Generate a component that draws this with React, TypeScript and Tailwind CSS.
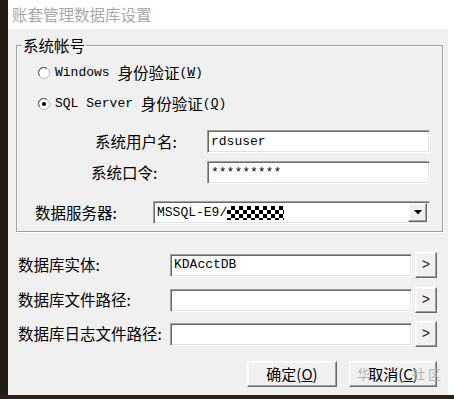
import React from "react";

const cjk = { fontFamily: '"Noto Sans CJK SC", "Noto Sans", sans-serif' };
const mono = { fontFamily: '"Liberation Mono", "DejaVu Sans Mono", monospace' };

const Radio: React.FC<{ checked?: boolean }> = ({ checked }) => (
  <svg width="12" height="12" viewBox="0 0 12 12" className="shrink-0 w-[12px] h-[12px]">
    <circle cx="6" cy="6" r="5.5" fill="#ffffff" stroke="#b8b8b8" strokeWidth="1" />
    <path d="M1.6 8.6 A5 5 0 0 1 8.6 1.6" stroke="#6a6a6a" strokeWidth="1.2" fill="none" />
    {checked && <circle cx="6" cy="6" r="2" fill="#000000" />}
  </svg>
);

const sunken =
  "bg-white border border-t-[#a0a0a0] border-l-[#a0a0a0] border-b-white border-r-white shadow-[inset_1px_1px_0_#696969,inset_-1px_-1px_0_#e3e3e3]";
const raised =
  "bg-[#f0f0f0] border border-t-white border-l-white border-b-[#696969] border-r-[#696969] shadow-[inset_-1px_-1px_0_#a0a0a0,inset_1px_1px_0_#f8f8f8]";

const TextBox: React.FC<{ className: string; value?: string }> = ({ className, value }) => (
  <div className={`${sunken} ${className} flex items-center pl-[3px] text-[13px] text-black`} style={mono}>
    {value}
  </div>
);

const BrowseButton = () => (
  <div className={`${raised} w-[22px] h-[26px] flex items-center justify-center text-[14px] text-[#222]`} style={mono}>
    &gt;
  </div>
);

export default function App() {
  return (
    <div className="w-[454px] h-[399px] flex flex-col bg-[#2a2119] overflow-hidden">
      <div className="flex flex-1">
        <div className="w-[8px] bg-[#231c16]" />
        <div className="flex-1 flex flex-col bg-white">
          <div className="h-[29px] flex items-center pl-[4px] text-[15.5px] text-[#a8a8a8]" style={cjk}>
            账套管理数据库设置
          </div>
          <div className="relative flex-1 mr-[6px] bg-[#f0f0f0] flex flex-col text-black" style={cjk}>
            {/* group box */}
            <div className="relative mt-[16px] ml-[8px] w-[427px] h-[187px] border border-[#a0a0a0] shadow-[inset_1px_1px_0_#fff,1px_1px_0_#fff] flex flex-col">
              <span className="absolute left-[5px] top-[-12px] px-[1px] bg-[#f0f0f0] text-[15.5px] leading-[22px]">
                系统帐号
              </span>
              <div className="mt-[19px] ml-[21px] h-[16px] flex items-center gap-[5px]">
                <Radio />
                <span className="flex items-center">
                  <span className="text-[13px]" style={mono}>Windows&nbsp;</span>
                  <span className="text-[15.5px]">身份验证</span>
                  <span className="text-[13px]" style={mono}>
                    (<u>W</u>)
                  </span>
                </span>
              </div>
              <div className="mt-[15px] ml-[21px] h-[16px] flex items-center gap-[5px]">
                <Radio checked />
                <span className="flex items-center">
                  <span className="text-[13px]" style={mono}>SQL Server&nbsp;</span>
                  <span className="text-[15.5px]">身份验证</span>
                  <span className="text-[13px]" style={mono}>
                    (<u>Q</u>)
                  </span>
                </span>
              </div>
              <div className="mt-[18px] h-[23px] flex items-center">
                <span className="ml-[78px] text-[15.5px]">系统用户名:</span>
                <TextBox className="ml-auto mr-[12px] w-[223px] h-[23px]" value="rdsuser" />
              </div>
              <div className="mt-[8px] h-[23px] flex items-center">
                <span className="ml-[74px] text-[15.5px]">系统口令:</span>
                <TextBox className="ml-auto mr-[12px] w-[223px] h-[23px]" value="*********" />
              </div>
              <div className="mt-[17px] h-[23px] flex items-center">
                <span className="ml-[18px] text-[15.5px]">数据服务器:</span>
                <div className={`${sunken} ml-auto mr-[12px] w-[277px] h-[23px] flex items-center pl-[3px] pr-[2px]`}>
                  <span className="text-[13px] text-black" style={mono}>MSSQL-E9/</span>
                  <span className="inline-block w-[57px] h-[14px] bg-[repeating-conic-gradient(#000_0_25%,#fff_0_50%)] bg-[length:8px_8px]" />
                  <div className={`${raised} ml-auto w-[19px] h-[19px] flex items-center justify-center`}>
                    <svg width="8" height="5" viewBox="0 0 8 5">
                      <path d="M0 0 H8 L4 4.5 Z" fill="#000" />
                    </svg>
                  </div>
                </div>
              </div>
            </div>

            <div className="mt-[20px] h-[26px] flex items-center">
              <span className="ml-[10px] text-[15.5px]">数据库实体:</span>
              <div className="ml-auto mr-[11px] flex items-center gap-[3px]">
                <TextBox className="w-[242px] h-[23px]" value="KDAcctDB" />
                <BrowseButton />
              </div>
            </div>
            <div className="mt-[9px] h-[26px] flex items-center">
              <span className="ml-[10px] text-[15.5px]">数据库文件路径:</span>
              <div className="ml-auto mr-[11px] flex items-center gap-[3px]">
                <TextBox className="w-[242px] h-[23px]" />
                <BrowseButton />
              </div>
            </div>
            <div className="mt-[8px] h-[26px] flex items-center">
              <span className="ml-[10px] text-[15.5px] whitespace-nowrap">数据库日志文件路径:</span>
              <div className="ml-auto mr-[11px] flex items-center gap-[3px]">
                <TextBox className="w-[242px] h-[23px]" />
                <BrowseButton />
              </div>
            </div>

            <div className="mt-[14px] flex justify-end gap-[12px] mr-[11px]">
              <div className={`${raised} w-[90px] h-[26px] flex items-center justify-center text-[15px]`}>
                确定(<u>O</u>)
              </div>
              <div className={`${raised} w-[88px] h-[26px] flex items-center justify-center text-[15px]`}>
                取消(<u>C</u>)
              </div>
            </div>

            {/* watermark */}
            <span className="absolute left-[349px] top-[336px] text-[13px] leading-[18px] text-[#b4b4b4] whitespace-nowrap">
              华
            </span>
            <span className="absolute left-[404px] top-[336px] text-[13px] leading-[18px] text-[#b4b4b4] whitespace-nowrap">
              社&nbsp;区
            </span>
          </div>
        </div>
      </div>
      <div className="h-[4px] bg-[#2a2119]" />
    </div>
  );
}
